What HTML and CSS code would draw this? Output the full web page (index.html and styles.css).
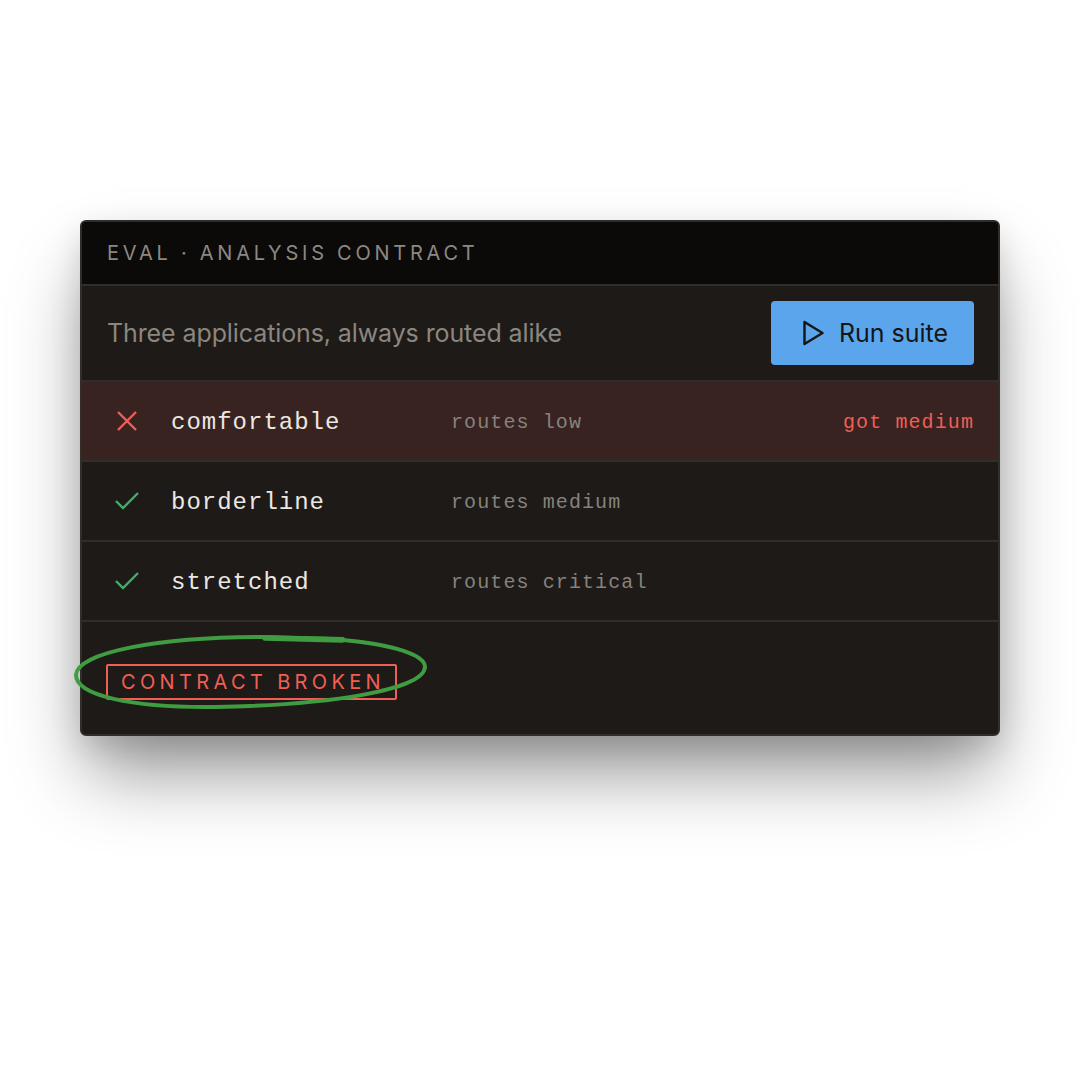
FILE: index.html
```html
<!DOCTYPE html>
<html lang="en">
<head>
<meta charset="utf-8">
<title>Eval · Analysis contract</title>
<link rel="stylesheet" href="styles.css">
</head>
<body>
<div class="card">
  <div class="head">EVAL · ANALYSIS CONTRACT</div>
  <div class="sub">
    <span class="sub-text">Three applications, always routed alike</span>
    <button class="run">
      <svg class="play" width="24" height="28" viewBox="0 0 24 28"><path d="M3.5 3 L21.5 14 L3.5 25 Z" fill="none" stroke="#151515" stroke-width="2.4" stroke-linejoin="round"/></svg>
      <span>Run suite</span>
    </button>
  </div>
  <div class="row row-fail">
    <span class="icon"><svg width="22" height="22" viewBox="0 0 22 22"><path d="M2 2 L20 20 M20 2 L2 20" stroke="#ef5f55" stroke-width="2.4" fill="none"/></svg></span>
    <span class="name">comfortable</span>
    <span class="route">routes low</span>
    <span class="got">got medium</span>
  </div>
  <div class="row">
    <span class="icon"><svg width="26" height="20" viewBox="0 0 26 20"><path d="M2 10 L9 17 L24 2" stroke="#3fb06a" stroke-width="2.4" fill="none"/></svg></span>
    <span class="name">borderline</span>
    <span class="route">routes medium</span>
  </div>
  <div class="row">
    <span class="icon"><svg width="26" height="20" viewBox="0 0 26 20"><path d="M2 10 L9 17 L24 2" stroke="#3fb06a" stroke-width="2.4" fill="none"/></svg></span>
    <span class="name">stretched</span>
    <span class="route">routes critical</span>
  </div>
  <div class="foot">
    <span class="badge">CONTRACT BROKEN</span>
    <svg class="circle" width="370" height="90" viewBox="66 626 370 90"><path d="M343 640 C 395 645, 425 655, 425 667 C 424 690, 330 705, 215 707 C 130 708, 76 695, 76 675 C 77 652, 160 637, 262 637 L 343 639" fill="none" stroke="#3f9c41" stroke-width="4" stroke-linecap="round"/><path d="M265 638 L 342 640" stroke="#3f9c41" stroke-width="5.5" stroke-linecap="round"/></svg>
  </div>
</div>
</body>
</html>
```
FILE: styles.css
```css
* { box-sizing: border-box; }
html, body { margin: 0; padding: 0; background: #ffffff; }
body { width: 1080px; height: 1080px; overflow: hidden; }
.card {
  width: 920px;
  margin: 220px 0 0 80px;
  background: #1e1a18;
  border: 2px solid #302d2b;
  border-radius: 6px;
  box-shadow: 0 44px 70px -8px rgba(0,0,0,0.42), 0 10px 30px rgba(0,0,0,0.12);
}
.head {
  height: 64px;
  background: #0b0a09;
  border-bottom: 2px solid #302d2b;
  border-radius: 4px 4px 0 0;
  display: flex;
  align-items: center;
  padding-left: 25px;
  font-family: Inter, "Liberation Sans", sans-serif;
  font-size: 20px;
  letter-spacing: 3.75px;
  color: #8c8883;
}
.sub {
  height: 96px;
  border-bottom: 2px solid #302d2b;
  display: flex;
  align-items: center;
  justify-content: space-between;
  padding: 0 24px 0 25px;
}
.sub-text {
  font-family: Inter, "Liberation Sans", sans-serif;
  font-size: 25px;
  color: #8b8680;
  letter-spacing: -0.1px;
}
.run {
  width: 203px;
  height: 64px;
  background: #5aa5ec;
  border: none;
  border-radius: 4px;
  display: flex;
  align-items: center;
  justify-content: center;
  gap: 14px;
  font-family: Inter, "Liberation Sans", sans-serif;
  font-size: 25px;
  color: #151515;
  padding: 0 0 0 4px;
}
.play { display: block; }
.row {
  height: 80px;
  border-bottom: 2px solid #302d2b;
  display: flex;
  align-items: center;
  padding: 3px 24px 0 0;
  font-family: "Liberation Mono", "DejaVu Sans Mono", monospace;
}
.row-fail { background: #382321; }
.icon {
  width: 89px;
  display: flex;
  justify-content: center;
  padding-left: 0;
  margin-top: -3px;
}
.icon svg { display: block; }
.name {
  width: 280px;
  font-size: 24px;
  letter-spacing: 1px;
  color: #ebe7e2;
}
.route {
  font-size: 20px;
  letter-spacing: 1.1px;
  color: #87827d;
  flex: 1;
}
.got {
  font-size: 20px;
  letter-spacing: 1.1px;
  color: #ef5f55;
}
.foot {
  position: relative;
  height: 112px;
  padding: 42px 0 0 24px;
}
.badge {
  display: inline-block;
  height: 36px;
  line-height: 32px;
  padding: 0 10px 0 13px;
  border: 2px solid #ef5f55;
  border-radius: 2px;
  font-family: Inter, "Liberation Sans", sans-serif;
  font-size: 20px;
  letter-spacing: 4.35px;
  color: #ef5f55;
}
.circle {
  position: absolute;
  left: -16px;
  top: 4px;
}
```
